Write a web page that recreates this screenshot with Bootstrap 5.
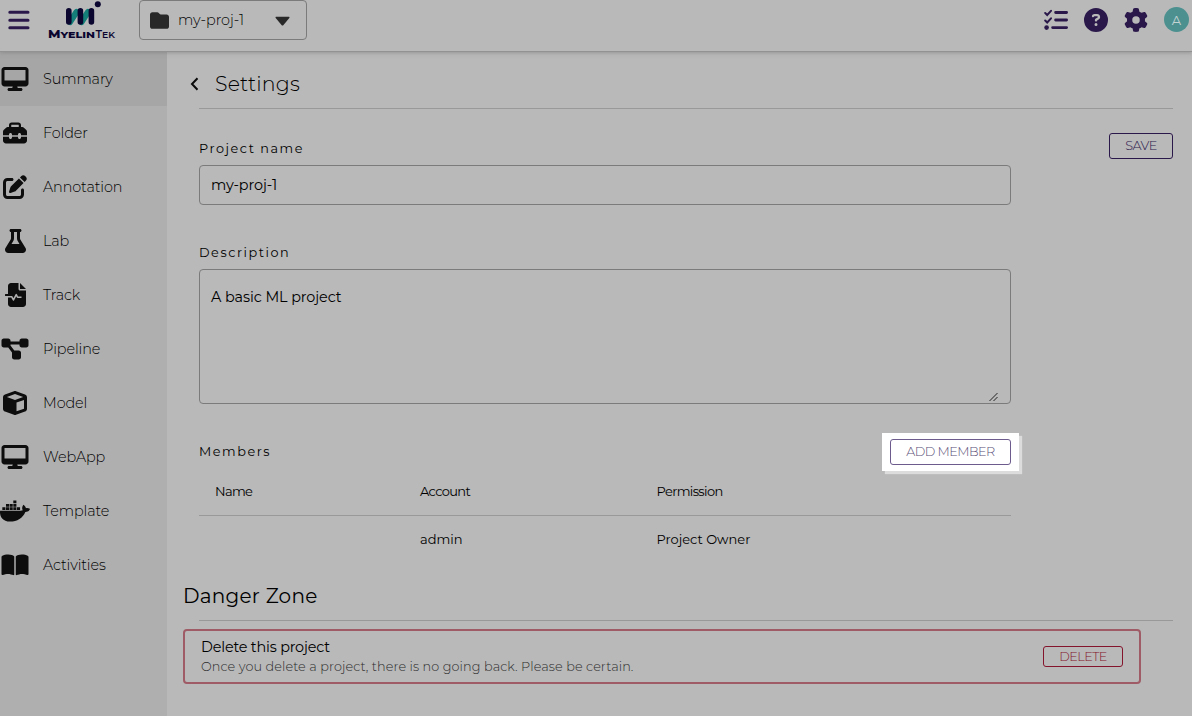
<!DOCTYPE html>
<html lang="en">
<head>
<meta charset="utf-8">
<title>Project settings</title>
<link href="https://cdn.jsdelivr.net/npm/bootstrap@5.3.0/dist/css/bootstrap.min.css" rel="stylesheet">
<style>
body{font-family:Montserrat,Inter,"Open Sans",sans-serif;font-weight:300;background:#b9b9b9;color:#000;font-size:14.4px;line-height:20px;height:716px;overflow:hidden}
svg{display:block;flex:none}
.topbar{height:52px;border-bottom:1px solid #929292;box-shadow:0 1px 4px #7778;position:relative;z-index:2;background:#b9b9b9;color:#2b184b}
.burger{margin:9px 0 0 8px}
.brand-logo{margin:0 0 0 18px}
.proj{width:168px;height:40px;border:1px solid #7b7b7b;border-radius:4px;margin-left:23px;padding:0 16px 0 10px;color:#000}
.proj .nm{margin-left:9px}
.tools{margin-top:7px;gap:16px}
.avatar{width:25px;height:25px;background:#4c9090;color:#c3d3d3;font-size:13px;font-weight:400;margin-right:3px}
.side{width:167px;background:#afafaf;height:664px}
.side a{height:54px;color:#000;text-decoration:none;letter-spacing:-.1px}
.side a.active{background:#a6a6a6}
.side a span:first-child{width:30px;margin-right:13px;display:flex;justify-content:center;color:#0d0d0d}
.page{padding:0 19px 0 32px}
.rule{height:1px;background:#999}
.ttl{height:56px;margin-left:-9px;padding-top:8px;font-size:20.5px;letter-spacing:.15px}
.ttl span{margin-left:16px}
.formcol{width:812px}
.lbl{font-size:12.8px;letter-spacing:1.55px;font-weight:400;line-height:22px;display:block}
.field{display:block;width:100%;border:1px solid #7b7b7b;border-radius:4px;background:transparent;padding:0 11px 1px;color:#000;font-weight:400;letter-spacing:-.08px;outline:0}
.grip{position:absolute;right:12px;bottom:2px}
.ob{border:1px solid #2b184b;border-radius:3px;font-size:12.8px;letter-spacing:-.55px;font-weight:300;height:26px;background:transparent;color:#2b184b;padding:0 0 1px;line-height:23px}
.spot{background:#fff;padding:6px 8px;box-shadow:3px 3px 1px #dcdcdc;width:137px;height:38px;margin-right:-8px}
.spot .ob{width:121px;border-color:#6c5b8c;color:#5b5078}
.mem{table-layout:fixed;width:812px;font-size:13px;line-height:20px;font-weight:400}
.mem td,.mem th{padding:0 16px;height:48px;font-weight:400;vertical-align:middle}
.mem th{font-size:13px;letter-spacing:-.65px}
.mem thead tr{border-bottom:1px solid #999}
.danger{width:958px;height:55px;border:2px solid #9f5c67;border-radius:4px;margin-left:-16px;padding:0 16px}
.dz{font-size:20px;margin-left:-16px;letter-spacing:.25px;line-height:26px;font-weight:400}
.dt{font-weight:400;letter-spacing:-.19px}
.danger .ob{width:80px;height:21px;border-color:#84142b;color:#84142b;line-height:19px}
.note{font-size:12.8px;color:#2c2c2c;letter-spacing:.1px;line-height:20px}
</style>
</head>
<body>
<header class="topbar d-flex align-items-start">
 <svg class="burger" width="22" height="22" viewBox="0 0 22 22" stroke="#2b184b" stroke-width="3" stroke-linecap="round"><path d="M1.8 3.3H20M1.8 11.2H20M1.8 18.8H20"/></svg>
 <svg class="brand-logo" width="68" height="42" viewBox="0 0 68 42"><path d="M28.500 12l-6.500 10M40 12l-6.500 10" stroke="#137f78" stroke-width="6" stroke-linecap="round"/><path d="M20.800 10.700V22M32.400 10.700V22M43.400 10.700V22" stroke="#0b0630" stroke-width="5.600" stroke-linecap="round"/><circle cx="49.800" cy="4.300" r="3" fill="#0b0630"/><g font-family="Montserrat,Inter,sans-serif" fill="#0b0630" font-size="10"><text x="0" y="38" font-weight="800" textLength="47" lengthAdjust="spacingAndGlyphs">M<tspan font-size="8.500">YELIN</tspan></text><text x="47.500" y="38" font-weight="600" textLength="19.500" lengthAdjust="spacingAndGlyphs">T<tspan font-size="8.500">EK</tspan></text></g></svg>
 <div class="proj d-flex align-items-center">
  <svg width="19" height="19" viewBox="0 0 512 512" fill="#282828"><path d="M64 480H448c35.300 0 64-28.700 64-64V160c0-35.300-28.700-64-64-64H288c-10.100 0-19.600-4.700-25.600-12.800L243.200 57.600C231.100 41.500 212.100 32 192 32H64C28.700 32 0 60.700 0 96V416c0 35.300 28.700 64 64 64z"/></svg>
  <span class="nm">my-proj-1</span>
  <svg class="ms-auto" style="margin-top:2px" width="15" height="10" viewBox="0 0 15 10" fill="#282828"><path d="M1 .8H14Q15 1 14.300 2L8.500 9Q7.500 10 6.500 9L.7 2Q0 1 1 .8z"/></svg>
 </div>
 <div class="tools d-flex align-items-center ms-auto">
  <svg width="24" height="24" viewBox="0 0 24 24" fill="none" stroke="#2b184b" stroke-width="2.800" stroke-linecap="round"><path d="M11.600 4.500H22.600M11.600 12H22.600M8.600 19.600H22.600"/><path stroke-width="2" d="M1.200 5L3.200 7L7 2.800M1.200 12.500L3.200 14.500L7 10.300"/><circle cx="2.600" cy="19.600" r="2.300" fill="#2b184b" stroke="none"/></svg>
  <svg width="24" height="24" viewBox="0 0 512 512" fill="#2b184b"><path fill-rule="evenodd" d="M256 512A256 256 0 1 0 256 0a256 256 0 1 0 0 512zM169.800 165.300c7.900-22.300 29.100-37.300 52.800-37.300h58.300c34.900 0 63.100 28.300 63.100 63.100c0 22.600-12.100 43.500-31.700 54.800L280 264.400c-.2 13-10.900 23.600-24 23.600c-13.300 0-24-10.700-24-24V250.500c0-8.600 4.600-16.500 12.100-20.800l44.300-25.400c4.700-2.700 7.600-7.700 7.600-13.100c0-8.400-6.800-15.100-15.100-15.100H222.600c-3.400 0-6.400 2.100-7.500 5.300l-.4 1.200c-4.400 12.500-18.200 19-30.600 14.600s-19-18.200-14.600-30.600l.3-1.300zM224 352a32 32 0 1 1 64 0 32 32 0 1 1-64 0z"/></svg>
  <svg width="24" height="24" viewBox="0 0 512 512" fill="#2b184b"><path fill-rule="evenodd" d="M495.900 166.600c3.200 8.700 .5 18.400-6.400 24.600l-43.300 39.400c1.100 8.300 1.700 16.800 1.700 25.400s-.6 17.100-1.700 25.400l43.300 39.400c6.900 6.200 9.600 15.900 6.400 24.600c-4.400 11.900-9.700 23.300-15.800 34.300l-4.700 8.100c-6.600 11-14 21.400-22.100 31.200c-5.900 7.200-15.700 9.600-24.500 6.800l-55.700-17.700c-13.400 10.300-28.200 18.900-44 25.400l-12.500 57.100c-2 9.100-9 16.300-18.200 17.800c-13.800 2.300-28 3.500-42.500 3.500s-28.700-1.200-42.500-3.500c-9.200-1.500-16.200-8.700-18.200-17.800l-12.500-57.100c-15.800-6.500-30.600-15.100-44-25.400L83.100 425.900c-8.800 2.800-18.600 .3-24.500-6.800c-8.100-9.800-15.500-20.200-22.100-31.200l-4.700-8.100c-6.100-11-11.400-22.400-15.800-34.300c-3.200-8.700-.5-18.400 6.400-24.600l43.300-39.400C64.600 273.100 64 264.600 64 256s.6-17.100 1.700-25.400L22.400 191.200c-6.900-6.200-9.600-15.900-6.400-24.600c4.400-11.900 9.700-23.300 15.800-34.300l4.700-8.100c6.600-11 14-21.400 22.100-31.200c5.900-7.200 15.700-9.600 24.500-6.800l55.700 17.700c13.400-10.300 28.200-18.900 44-25.400l12.500-57.100c2-9.100 9-16.300 18.200-17.800C227.300 1.200 241.500 0 256 0s28.700 1.200 42.500 3.500c9.200 1.500 16.200 8.700 18.200 17.800l12.500 57.100c15.800 6.500 30.600 15.100 44 25.400l55.700-17.700c8.800-2.800 18.600-.3 24.500 6.800c8.100 9.800 15.500 20.200 22.100 31.200l4.700 8.100c6.100 11 11.400 22.400 15.800 34.300zM256 336a80 80 0 1 0 0-160 80 80 0 1 0 0 160z"/></svg>
  <span class="avatar rounded-circle d-flex align-items-center justify-content-center">A</span>
 </div>
</header>
<div class="d-flex">
<nav class="side d-flex flex-column flex-shrink-0">
 <a href="#" class="active d-flex align-items-center"><span><svg width="28" height="24" viewBox="0 0 576 512" fill="currentColor"><path id="desk" fill-rule="evenodd" d="M64 0C28.700 0 0 28.700 0 64V352c0 35.300 28.700 64 64 64H240l-10.700 32H160c-17.700 0-32 14.300-32 32s14.300 32 32 32H416c17.700 0 32-14.300 32-32s-14.300-32-32-32H346.700L336 416H512c35.300 0 64-28.700 64-64V64c0-35.300-28.700-64-64-64H64zM512 64V288H64V64H512z"/></svg></span><span>Summary</span></a>
 <a href="#" class="d-flex align-items-center"><span><svg width="24" height="24" viewBox="0 0 512 512" fill="currentColor"><path fill-rule="evenodd" d="M176 88v40H336V88c0-4.400-3.600-8-8-8H184c-4.400 0-8 3.600-8 8zm-48 40V88c0-30.900 25.100-56 56-56H328c30.900 0 56 25.100 56 56v40h28.100c12.700 0 24.900 5.100 33.900 14.100l51.900 51.900c9 9 14.100 21.200 14.100 33.900V304H384V288c0-17.700-14.300-32-32-32s-32 14.300-32 32v16H192V288c0-17.700-14.300-32-32-32s-32 14.300-32 32v16H0V227.900c0-12.700 5.100-24.900 14.100-33.900l51.900-51.900c9-9 21.200-14.100 33.900-14.100H128zM0 416V336H128v16c0 17.700 14.300 32 32 32s32-14.300 32-32V336H320v16c0 17.700 14.300 32 32 32s32-14.300 32-32V336H512v80c0 35.300-28.700 64-64 64H64c-35.300 0-64-28.700-64-64z"/></svg></span><span>Folder</span></a>
 <a href="#" class="d-flex align-items-center"><span><svg width="24" height="24" viewBox="0 0 512 512" fill="currentColor"><path d="M471.600 21.700c-21.900-21.900-57.300-21.900-79.200 0L362.300 51.700l97.900 97.900 30.100-30.100c21.900-21.900 21.900-57.300 0-79.200L471.600 21.700zm-299.200 220c-6.100 6.100-10.800 13.600-13.500 21.900l-29.600 88.800c-2.900 8.600-.6 18.100 5.800 24.600s15.900 8.700 24.600 5.800l88.800-29.600c8.200-2.700 15.700-7.400 21.900-13.500L437.700 172.300 339.700 74.300 172.400 241.700zM96 64C43 64 0 107 0 160V416c0 53 43 96 96 96H352c53 0 96-43 96-96V320c0-17.700-14.300-32-32-32s-32 14.300-32 32v96c0 17.700-14.300 32-32 32H96c-17.700 0-32-14.300-32-32V160c0-17.700 14.300-32 32-32h96c17.700 0 32-14.300 32-32s-14.300-32-32-32H96z"/></svg></span><span>Annotation</span></a>
 <a href="#" class="d-flex align-items-center"><span><svg width="21" height="24" viewBox="0 0 448 512" fill="currentColor"><path fill-rule="evenodd" d="M288 0H160 128C110.300 0 96 14.300 96 32s14.300 32 32 32V196.800c0 11.800-3.300 23.500-9.500 33.500L10.300 406.200C3.600 417.200 0 429.700 0 442.600C0 480.900 31.100 512 69.400 512H378.600c38.300 0 69.400-31.100 69.400-69.400c0-12.800-3.600-25.400-10.300-36.400L329.500 230.400c-6.200-10.100-9.500-21.700-9.500-33.500V64c17.700 0 32-14.300 32-32s-14.300-32-32-32H288zM192 196.800V64h64V196.800c0 23.700 6.600 46.900 19 67.100L309.500 320h-171L173 263.900c12.400-20.200 19-43.400 19-67.100z"/></svg></span><span>Lab</span></a>
 <a href="#" class="d-flex align-items-center"><span><svg width="21" height="24" viewBox="0 0 448 512"><path fill="currentColor" d="M128 0C92.700 0 64 28.700 64 64V448c0 35.300 28.700 64 64 64H384c35.300 0 64-28.700 64-64V160H320c-17.700 0-32-14.300-32-32V0zM320 0V128H448z"/><path d="M64 290H142L180 362L240 248L268 304H352" fill="none" stroke="#afafaf" stroke-width="34" stroke-linejoin="round"/><path d="M16 256H156" fill="none" stroke="currentColor" stroke-width="40" stroke-linecap="round"/></svg></span><span>Track</span></a>
 <a href="#" class="d-flex align-items-center"><span><svg width="28" height="24" viewBox="0 0 576 512" fill="currentColor"><path d="M0 80C0 53.500 21.500 32 48 32h96c26.500 0 48 21.500 48 48V96H384V80c0-26.500 21.500-48 48-48h96c26.500 0 48 21.500 48 48v96c0 26.500-21.500 48-48 48H432c-26.500 0-48-21.500-48-48V160H192v16c0 1.700-.1 3.400-.3 5L272 288h96c26.500 0 48 21.500 48 48v96c0 26.500-21.500 48-48 48H272c-26.500 0-48-21.500-48-48V336c0-1.700 .1-3.400 .3-5L144 224H48c-26.500 0-48-21.500-48-48V80z"/></svg></span><span>Pipeline</span></a>
 <a href="#" class="d-flex align-items-center"><span><svg width="24" height="24" viewBox="0 0 512 512" fill="currentColor"><path fill-rule="evenodd" d="M234.500 5.700c13.900-5 29.100-5 43.100 0l192 68.600C495 83.400 512 107.500 512 134.600V377.400c0 27-17 51.200-42.500 60.300l-192 68.600c-13.900 5-29.100 5-43.100 0l-192-68.600C17 428.600 0 404.500 0 377.400V134.600c0-27 17-51.200 42.500-60.300l192-68.600zM256 66L82.300 128 256 190l173.700-62L256 66zm32 368.600l160-57.100v-188L288 246.600v188z"/></svg></span><span>Model</span></a>
 <a href="#" class="d-flex align-items-center"><span><svg width="28" height="24" viewBox="0 0 576 512" fill="currentColor"><use href="#desk"/></svg></span><span>WebApp</span></a>
 <a href="#" class="d-flex align-items-center"><span><svg width="30" height="24" viewBox="0 0 640 512" fill="currentColor"><path d="M349.900 236.300h-66.100v-59.400h66.100v59.400zm0-204.300h-66.100v60.700h66.100V32zm78.200 144.800H362v59.400h66.100v-59.400zm-156.300-72.100h-66.100v60.100h66.100v-60.100zm78.100 0h-66.100v60.100h66.100v-60.100zm276.800 100c-14.400-9.700-47.600-13.200-73.100-8.400-3.300-24-16.700-44.900-41.100-63.700l-14-9.300-9.300 14c-18.400 27.800-23.400 73.600-3.700 103.800-8.700 4.700-25.800 11.100-48.400 10.700H2.400c-8.700 50.800 5.800 116.800 44 162.100 37.100 43.900 92.700 66.200 165.400 66.200 157.400 0 273.900-72.500 328.400-204.200 21.400.4 67.600.1 91.300-45.200 1.500-2.500 6.600-13.200 8.500-17.100l-13.300-8.900zm-511.100-27.900h-66v59.400h66.100v-59.400zm78.100 0h-66.100v59.400h66.100v-59.400zm78.100 0h-66.100v59.400h66.100v-59.400zm-78.100-72.100h-66.100v60.100h66.100v-60.100z"/></svg></span><span>Template</span></a>
 <a href="#" class="d-flex align-items-center"><span><svg width="28" height="24" viewBox="0 0 576 512" fill="currentColor"><path d="M249.600 471.500c10.800 3.800 22.400-4.100 22.400-15.500V78.600c0-4.200-1.600-8.400-5-11C247.400 52 202.400 32 144 32C93.500 32 46.300 45.300 18.100 56.100C6.800 60.500 0 71.700 0 83.800V454.100c0 11.900 12.800 20.200 24.100 16.500C55.600 460.100 105.500 448 144 448c33.900 0 79 14 105.600 23.500zm76.800 0C353 462 398.100 448 432 448c38.500 0 88.400 12.100 119.900 22.600c11.300 3.800 24.100-4.600 24.100-16.500V83.800c0-12.100-6.800-23.300-18.100-27.600C529.700 45.300 482.500 32 432 32c-58.400 0-103.400 20-123 35.600c-3.300 2.600-5 6.800-5 11V456c0 11.400 11.700 19.300 22.400 15.500z"/></svg></span><span>Activities</span></a>
</nav>
<main class="page flex-grow-1">
 <div class="ttl d-flex align-items-center"><svg width="9" height="14" viewBox="0 0 9 14" fill="none" stroke="#0a0a0a" stroke-width="2"><path d="M7.500 1.300L2 7L7.500 12.700"/></svg><span>Settings</span></div>
 <div class="rule"></div>
 <div class="d-flex justify-content-between">
  <div class="formcol">
   <label class="lbl" style="margin-top:29px" for="pn">Project name</label>
   <input id="pn" class="field" style="height:40px;margin-top:5px" value="my-proj-1">
   <label class="lbl" style="margin-top:37px" for="ds">Description</label>
   <div class="position-relative"><textarea id="ds" class="field" style="height:135px;margin-top:5px;padding:17px 11px;resize:none">A basic ML project</textarea>
   <svg class="grip" width="10" height="10" viewBox="0 0 10 10" stroke="#222" stroke-width="1"><path d="M.5 9L8.500 1M4.500 9L8.500 5"/></svg></div>
   <div class="d-flex justify-content-between align-items-center" style="margin-top:29px"><span class="lbl" style="margin-top:-1px">Members</span><div class="spot"><button class="ob d-block">ADD MEMBER</button></div></div>
   <table class="mem" style="margin-top:-4px"><colgroup><col style="width:205px"><col style="width:236.500px"><col></colgroup>
    <thead><tr><th>Name</th><th>Account</th><th>Permission</th></tr></thead>
    <tbody><tr><td></td><td>admin</td><td>Project Owner</td></tr></tbody></table>
  </div>
  <button class="ob" style="width:64px;margin-top:24px">SAVE</button>
 </div>
 <div class="dz" style="margin-top:20px">Danger Zone</div>
 <div class="rule" style="margin-top:11px"></div>
 <div class="danger d-flex align-items-center justify-content-between" style="margin-top:8px">
  <div style="margin-top:1px"><div class="dt">Delete this project</div><div class="note">Once you delete a project, there is no going back. Please be certain.</div></div>
  <button class="ob">DELETE</button>
 </div>
</main>
</div>
<script src="https://cdn.jsdelivr.net/npm/bootstrap@5.3.0/dist/js/bootstrap.bundle.min.js"></script>
</body>
</html>
